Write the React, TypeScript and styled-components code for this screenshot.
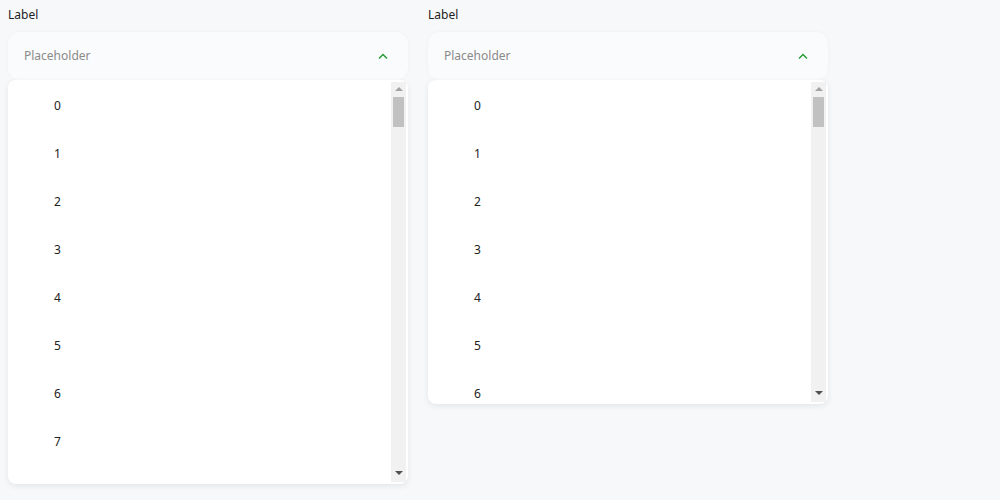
import React from "react";
import styled, { createGlobalStyle } from "styled-components";

const Global = createGlobalStyle`
  html, body { margin: 0; padding: 0; background: #f7f8fa; }
  body { font-family: "Noto Sans", "Open Sans", sans-serif; }
`;

const Page = styled.div`
  display: flex;
  gap: 20px;
  padding: 6px 8px 8px;
  align-items: flex-start;
`;

const Field = styled.div`
  width: 400px;
  display: flex;
  flex-direction: column;
`;

const Label = styled.div`
  font-size: 12px;
  line-height: 18px;
  color: #222;
  height: 26px;
`;

const Trigger = styled.div`
  height: 48px;
  box-sizing: border-box;
  display: flex;
  align-items: center;
  justify-content: space-between;
  padding: 0 20px 0 16px;
  background: #fafbfc;
  border-radius: 12px;
  box-shadow: 0 0 4px rgba(0, 0, 0, 0.04);
`;

const Placeholder = styled.span`
  font-size: 12px;
  line-height: 16px;
  margin-top: -1px;
  color: #8a8a8a;
`;

const Chevron = styled.svg`
  width: 10px;
  height: 6px;
  margin-top: -1px;
`;

const Panel = styled.div<{ $max: number }>`
  display: flex;
  height: ${(p) => p.$max}px;
  background: #fff;
  border-radius: 8px;
  padding: 2px;
  box-shadow: 0 2px 6px rgba(0, 0, 0, 0.08);
`;

const List = styled.ul`
  flex: 1;
  list-style: none;
  margin: 0;
  padding: 0;
  overflow: hidden;
`;

const Item = styled.li`
  height: 48px;
  display: flex;
  align-items: center;
  padding-left: 44px;
  font-size: 12px;
  color: #222;
`;

const ItemText = styled.span`
  margin-top: -2px;
`;

const ScrollBar = styled.div`
  width: 15px;
  display: flex;
  flex-direction: column;
  background: #f1f1f1;
`;

const ArrowButton = styled.div<{ $down?: boolean }>`
  height: 15px;
  display: flex;
  justify-content: center;
  align-items: ${(p) => (p.$down ? "flex-start" : "flex-end")};
  padding: ${(p) => (p.$down ? "4px 0 0" : "0 0 6px")};
  box-sizing: border-box;
`;

const Arrow = styled.div<{ $down?: boolean }>`
  width: 0;
  height: 0;
  border-left: 4px solid transparent;
  border-right: 4px solid transparent;
  ${(p) =>
    p.$down
      ? "border-top: 4px solid #505050;"
      : "border-bottom: 4px solid #a3a3a3;"}
`;

const Track = styled.div`
  flex: 1;
  padding: 0 2px;
`;

const Thumb = styled.div`
  height: 30px;
  background: #c1c1c1;
`;

const ROW = 48;

function Select({ max }: { max: number }) {
  const visible = Array.from({ length: 100 }, (_, i) => i).filter(
    (i) => i * ROW + ROW / 2 < max
  );
  return (
    <Field>
      <Label>Label</Label>
      <Trigger>
        <Placeholder>Placeholder</Placeholder>
        <Chevron viewBox="0 0 10 6">
          <polyline points="1,5.5 5,1.5 9,5.5" fill="none" stroke="#1e9a2f" strokeWidth="1.4" />
        </Chevron>
      </Trigger>
      <Panel $max={max}>
        <List>
          {visible.map((i) => (
            <Item key={i}>
              <ItemText>{i}</ItemText>
            </Item>
          ))}
        </List>
        <ScrollBar>
          <ArrowButton>
            <Arrow />
          </ArrowButton>
          <Track>
            <Thumb />
          </Track>
          <ArrowButton $down>
            <Arrow $down />
          </ArrowButton>
        </ScrollBar>
      </Panel>
    </Field>
  );
}

export default function App() {
  return (
    <>
      <Global />
      <Page>
        <Select max={400} />
        <Select max={320} />
      </Page>
    </>
  );
}
